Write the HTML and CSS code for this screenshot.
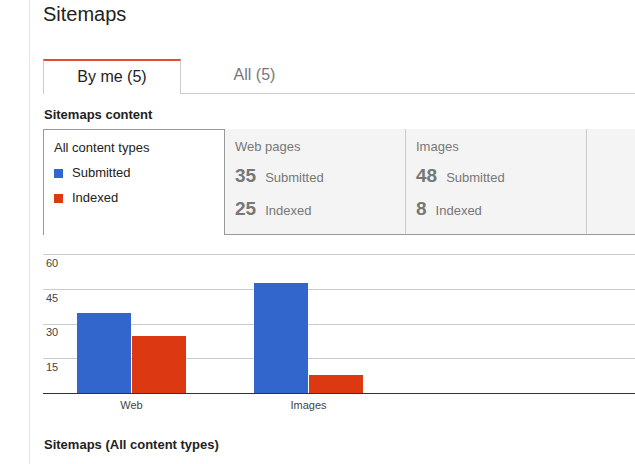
FILE: index.html
```html
<!DOCTYPE html>
<html>
<head>
<meta charset="utf-8">
<link rel="stylesheet" href="styles.css">
</head>
<body>
<div class="page">
  <h1 class="title">Sitemaps</h1>
  <div class="tabs">
    <div class="tab active">By me (5)</div>
    <div class="tab">All (5)</div>
  </div>
  <h2 class="section">Sitemaps content</h2>
  <div class="cards">
    <div class="card selected">
      <div class="legend-title">All content types</div>
      <div class="legend-row"><span class="sw blue"></span>Submitted</div>
      <div class="legend-row"><span class="sw red"></span>Indexed</div>
    </div>
    <div class="card">
      <div class="card-label">Web pages</div>
      <div class="stat"><span class="num">35</span><span class="what">Submitted</span></div>
      <div class="stat"><span class="num">25</span><span class="what">Indexed</span></div>
    </div>
    <div class="card">
      <div class="card-label">Images</div>
      <div class="stat"><span class="num">48</span><span class="what">Submitted</span></div>
      <div class="stat"><span class="num">8</span><span class="what">Indexed</span></div>
    </div>
    <div class="card last"></div>
  </div>
  <svg class="chart" width="592" height="190" viewBox="0 0 592 190">
    <g stroke="#cccccc" stroke-width="1">
      <line x1="0" y1="19.5" x2="592" y2="19.5"/>
      <line x1="0" y1="54.5" x2="592" y2="54.5"/>
      <line x1="0" y1="89.5" x2="592" y2="89.5"/>
      <line x1="0" y1="123.5" x2="592" y2="123.5"/>
    </g>
    <g class="axis">
      <text x="3" y="32">60</text>
      <text x="3" y="67">45</text>
      <text x="3" y="101">30</text>
      <text x="3" y="136">15</text>
    </g>
    <rect x="34" y="78" width="54" height="80" fill="#3366cc"/>
    <rect x="89" y="101" width="54" height="57" fill="#dc3912"/>
    <rect x="211" y="48" width="54" height="110" fill="#3366cc"/>
    <rect x="266" y="140" width="54" height="18" fill="#dc3912"/>
    <line x1="0" y1="158.5" x2="592" y2="158.5" stroke="#333333" stroke-width="1"/>
    <g class="axis" text-anchor="middle">
      <text x="88.5" y="174">Web</text>
      <text x="265.5" y="174">Images</text>
    </g>
  </svg>
  <h2 class="section bottom">Sitemaps (All content types)</h2>
</div>
</body>
</html>
```
FILE: styles.css
```css
html, body {
  margin: 0;
  padding: 0;
  background: #ffffff;
  overflow: hidden;
}
body {
  font-family: "Liberation Sans", Arial, sans-serif;
  color: #222222;
  width: 635px;
  height: 464px;
}
.page {
  margin-left: 29px;
  border-left: 1px solid #e5e5e5;
  padding-left: 13px;
  height: 464px;
  width: 606px;
  box-sizing: border-box;
  overflow: hidden;
}
.title {
  margin: 0;
  padding-top: 3px;
  font-size: 20px;
  font-weight: normal;
  line-height: 23px;
  color: #222222;
}
.tabs {
  display: flex;
  margin-top: 33px;
  border-bottom: 1px solid #cccccc;
}
.tab {
  height: 33px;
  line-height: 32px;
  font-size: 16px;
  text-align: center;
  color: #777777;
  width: 147px;
  margin-bottom: -1px;
}
.tab.active {
  width: 136px;
  color: #222222;
  background: #ffffff;
  border-top: 2px solid #dd4b39;
  border-left: 1px solid #cccccc;
  border-right: 1px solid #cccccc;
}
.section {
  margin: 12px 0 6px 1px;
  font-size: 13px;
  font-weight: bold;
  line-height: 17px;
  color: #222222;
}
.section.bottom {
  margin-top: 11px;
}
.cards {
  display: flex;
  height: 106px;
}
.card {
  box-sizing: border-box;
  flex: none;
  width: 181px;
  height: 106px;
  background: #f4f4f4;
  border-bottom: 1px solid #999999;
  border-right: 1px solid #cccccc;
  padding: 8px 0 0 10px;
  color: #777777;
  font-size: 13px;
}
.card.selected {
  width: 182px;
  background: #ffffff;
  border: 1px solid #999999;
  border-bottom: none;
  padding: 5px 0 0 10px;
  color: #222222;
}
.card.last {
  flex: 1 0 auto;
  width: auto;
  border-right: none;
}
.legend-title, .legend-row {
  line-height: 25px;
  height: 25px;
}
.legend-row {
  display: flex;
  align-items: center;
}
.sw {
  display: inline-block;
  width: 9px;
  height: 9px;
  margin-right: 9px;
  position: relative;
  top: 1px;
}
.sw.blue { background: #3366cc; }
.sw.red { background: #dc3912; }
.card-label {
  line-height: 20px;
  height: 20px;
}
.stat {
  display: flex;
  align-items: baseline;
  height: 33px;
  line-height: 33px;
  margin-top: 2px;
  margin-bottom: -2px;
}
.num {
  font-size: 19px;
  font-weight: bold;
  color: #777777;
  margin-right: 9px;
}
.what {
  font-size: 13px;
  color: #777777;
}
.chart {
  display: block;
}
.axis text {
  font-family: "Liberation Sans", Arial, sans-serif;
  font-size: 11px;
  fill: #444444;
}
```
